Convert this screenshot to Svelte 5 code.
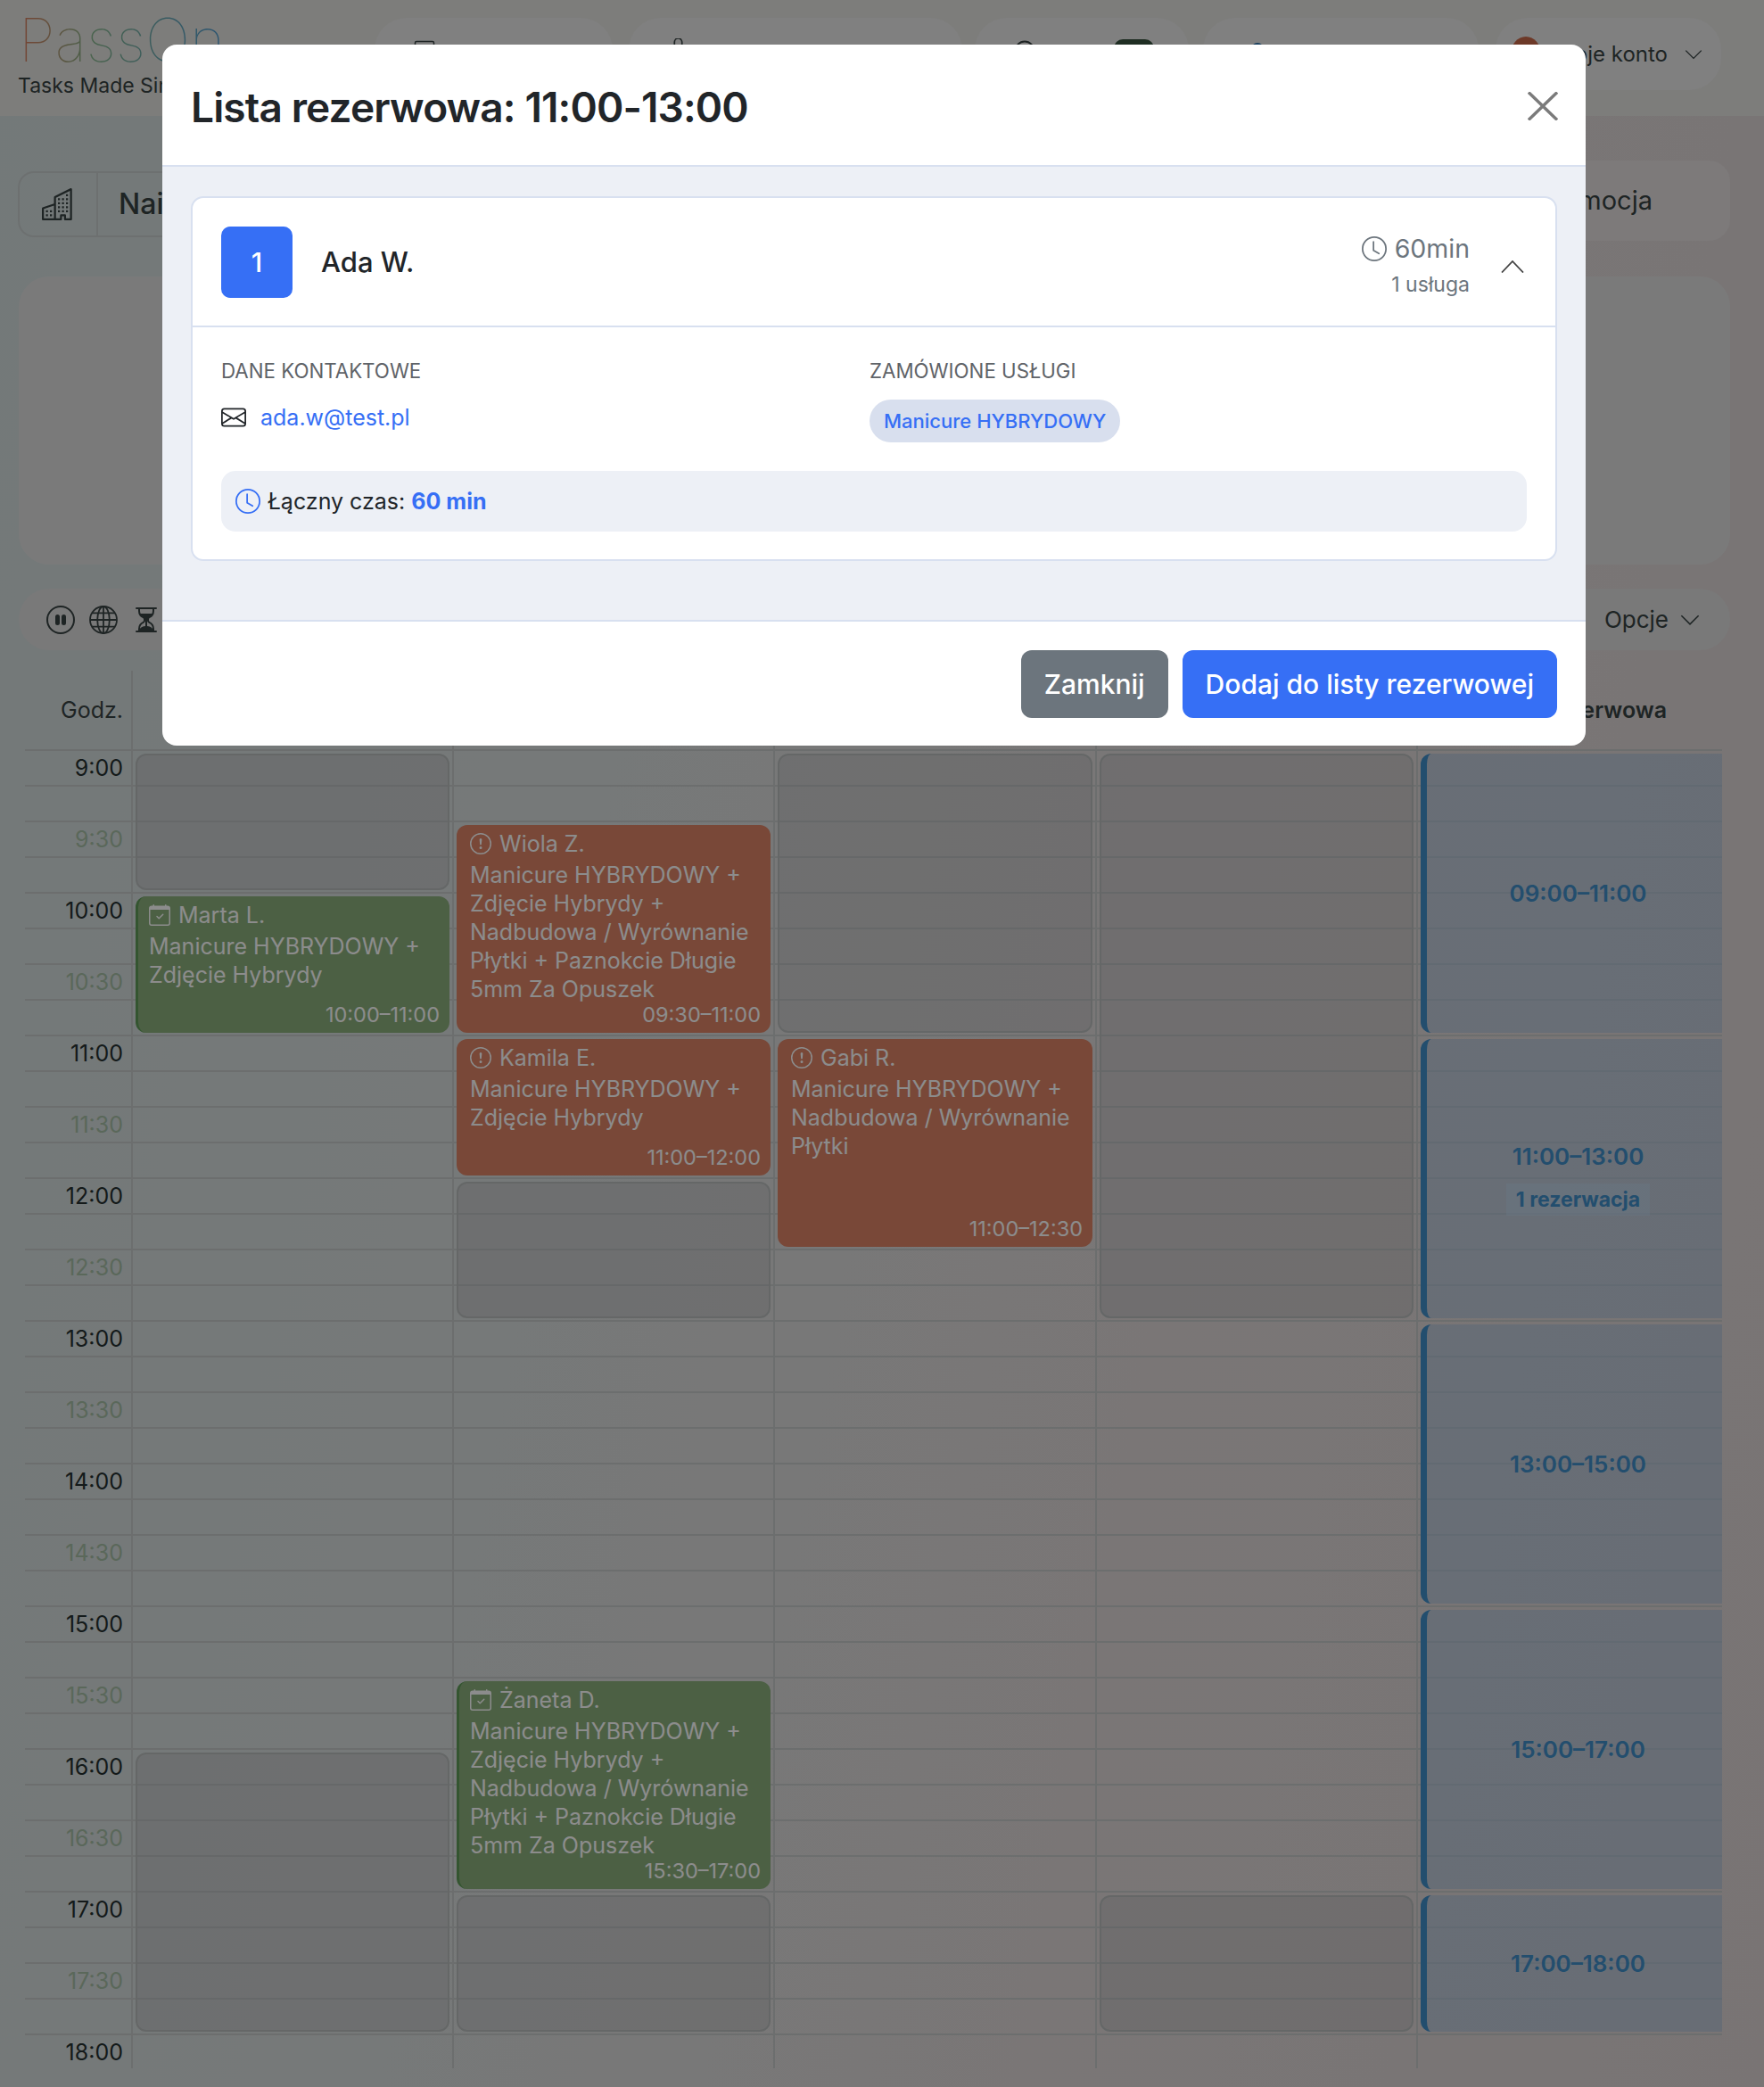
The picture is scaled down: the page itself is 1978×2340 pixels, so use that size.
<script>
	const hours = [];
	for (let h = 9; h <= 18; h++) {
		hours.push(`${h}:00`);
		if (h < 18) hours.push(`${h}:30`);
	}

	const rowH = 40;
	// px from the top of the grid, 160px per hour
	const y = (t) => {
		const [h, m] = t.split(':').map(Number);
		return (h - 9 + m / 60) * rowH * 4;
	};
	const box = (from, to) => `top:${y(from) + 3}px;height:${y(to) - y(from) - 7}px`;

	const long = 'Manicure HYBRYDOWY + Zdjęcie Hybrydy + Nadbudowa / Wyrównanie Płytki + Paznokcie Długie 5mm Za Opuszek';
	const short = 'Manicure HYBRYDOWY + Zdjęcie Hybrydy';

	const columns = [
		{
			blocked: [['9:00', '10:00'], ['16:00', '18:00']],
			events: [{ kind: 'green', name: 'Marta L.', text: short, from: '10:00', to: '11:00', label: '10:00–11:00' }]
		},
		{
			blocked: [['12:00', '13:00'], ['17:00', '18:00']],
			events: [
				{ kind: 'red', name: 'Wiola Z.', text: long, from: '9:30', to: '11:00', label: '09:30–11:00' },
				{ kind: 'red', name: 'Kamila E.', text: short, from: '11:00', to: '12:00', label: '11:00–12:00' },
				{ kind: 'green', name: 'Żaneta D.', text: long, from: '15:30', to: '17:00', label: '15:30–17:00' }
			]
		},
		{
			blocked: [['9:00', '11:00']],
			events: [
				{
					kind: 'red',
					name: 'Gabi R.',
					text: 'Manicure HYBRYDOWY + Nadbudowa / Wyrównanie Płytki',
					from: '11:00',
					to: '12:30',
					label: '11:00–12:30'
				}
			]
		},
		{ blocked: [['9:00', '13:00'], ['17:00', '18:00']], events: [] }
	];

	const waitlist = [
		{ from: '9:00', to: '11:00', label: '09:00–11:00' },
		{ from: '11:00', to: '13:00', label: '11:00–13:00', count: '1 rezerwacja' },
		{ from: '13:00', to: '15:00', label: '13:00–15:00' },
		{ from: '15:00', to: '17:00', label: '15:00–17:00' },
		{ from: '17:00', to: '18:00', label: '17:00–18:00' }
	];
</script>

{#snippet clock(cls)}
	<svg class={cls} viewBox="0 0 16 16" fill="currentColor">
		<path d="M8 3.5a.5.5 0 0 0-1 0V9a.5.5 0 0 0 .252.434l3.5 2a.5.5 0 0 0 .496-.868L8 8.71V3.5z" />
		<path d="M8 16A8 8 0 1 0 8 0a8 8 0 0 0 0 16zm7-8A7 7 0 1 1 1 8a7 7 0 0 1 14 0z" />
	</svg>
{/snippet}

{#snippet chevron(cls)}
	<svg class={cls} viewBox="0 0 16 16" fill="none" stroke="currentColor" stroke-width="1.1">
		<path d="M1 4.5l7 7 7-7" />
	</svg>
{/snippet}

<div class="page">
	<header class="top">
		<div class="logo">
			<div class="logo-word">PassOn</div>
			<div class="logo-sub">Tasks Made Simple</div>
		</div>
		<nav class="nav">
			<div class="nav-pill p1">
				<svg class="nav-icon" viewBox="0 0 16 16" fill="none" stroke="currentColor"><rect x="1" y="1" width="14" height="14" rx="1" /><path d="M1 4h14M4 6.5h2M7 6.5h2M10 6.5h2" /></svg>
			</div>
			<div class="nav-pill p2">
				<svg class="nav-icon bag" viewBox="0 0 16 16" fill="none" stroke="currentColor"><path d="M5.5 5V2.5a2.5 2.5 0 0 1 5 0V5M2 5h12v10H2z" /></svg>
			</div>
			<div class="nav-pill p3">
				<svg class="nav-icon person" viewBox="0 0 16 16" fill="none" stroke="currentColor" stroke-width="1.3"><circle cx="8" cy="8" r="7" /></svg>
				<span class="badge"></span>
			</div>
			<div class="nav-pill p4"><span class="dot"></span></div>
			<div class="nav-pill p5">
				<span class="avatar"></span>
				<span class="account">Moje konto</span>
				{@render chevron('account-chevron')}
			</div>
		</nav>
	</header>

	<div class="salon-row">
		<div class="salon">
			<div class="salon-icon">
				<svg viewBox="0 0 16 16" fill="currentColor">
					<path d="M14.763.075A.5.5 0 0 1 15 .5v15a.5.5 0 0 1-.5.5h-3a.5.5 0 0 1-.5-.5V14h-1v1.5a.5.5 0 0 1-.5.5h-9a.5.5 0 0 1-.5-.5V10a.5.5 0 0 1 .342-.474L6 7.64V4.5a.5.5 0 0 1 .276-.447l8-4a.5.5 0 0 1 .487.022ZM6 8.694 1 10.36V15h5V8.694ZM7 15h2v-1.5a.5.5 0 0 1 .5-.5h2a.5.5 0 0 1 .5.5V15h2V1.309l-7 3.5V15Z" />
					<path d="M2 11h1v1H2v-1Zm2 0h1v1H4v-1Zm-2 2h1v1H2v-1Zm2 0h1v1H4v-1Zm4-4h1v1H8V9Zm2 0h1v1h-1V9Zm-2 2h1v1H8v-1Zm2 0h1v1h-1v-1Zm2-2h1v1h-1V9Zm0 2h1v1h-1v-1ZM8 7h1v1H8V7Zm2 0h1v1h-1V7Zm2 0h1v1h-1V7ZM8 5h1v1H8V5Zm2 0h1v1h-1V5Zm2 0h1v1h-1V5Zm0-2h1v1h-1V3Z" />
				</svg>
			</div>
			<div class="salon-name">Nail Studio</div>
		</div>
		<div class="promo">Promocja</div>
	</div>

	<div class="panel"></div>

	<div class="toolbar">
		<div class="tools">
			<svg viewBox="0 0 16 16" fill="currentColor">
				<path d="M8 15A7 7 0 1 1 8 1a7 7 0 0 1 0 14zm0 1A8 8 0 1 0 8 0a8 8 0 0 0 0 16z" />
				<path d="M5 6.25a1.25 1.25 0 1 1 2.5 0v3.5a1.25 1.25 0 1 1-2.5 0v-3.5zm3.5 0a1.25 1.25 0 1 1 2.5 0v3.5a1.25 1.25 0 1 1-2.5 0v-3.5z" />
			</svg>
			<svg viewBox="0 0 16 16" fill="none" stroke="currentColor" stroke-width="0.9">
				<circle cx="8" cy="8" r="7.5" />
				<ellipse cx="8" cy="8" rx="3.4" ry="7.5" />
				<path d="M8 .5v15M.5 8h15M1.6 4.2h12.8M1.6 11.8h12.8" />
			</svg>
			<svg viewBox="0 0 16 16" fill="currentColor">
				<path d="M2.5 15a.5.5 0 1 1 0-1h1v-1a4.5 4.5 0 0 1 2.557-4.06c.29-.139.443-.377.443-.59v-.7c0-.213-.154-.451-.443-.59A4.5 4.5 0 0 1 3.5 3V2h-1a.5.5 0 0 1 0-1h11a.5.5 0 0 1 0 1h-1v1a4.5 4.5 0 0 1-2.557 4.06c-.29.139-.443.377-.443.59v.7c0 .213.154.451.443.59A4.5 4.5 0 0 1 12.5 13v1h1a.5.5 0 0 1 0 1h-11zm2-13v1c0 .537.12 1.045.337 1.5h6.326c.216-.455.337-.963.337-1.5V2h-7zm3 6.35c0 .701-.478 1.236-1.011 1.492A3.5 3.5 0 0 0 4.5 13s.866-1.299 3-1.48V8.35zm1 0v3.17c2.134.181 3 1.48 3 1.48a3.5 3.5 0 0 0-1.989-3.158C8.978 9.586 8.5 9.052 8.5 8.351z" />
			</svg>
		</div>
		<div class="options">Opcje {@render chevron('options-chevron')}</div>
	</div>

	<div class="calendar">
		<div class="head time-head">Godz.</div>
		<div class="head"></div>
		<div class="head"></div>
		<div class="head"></div>
		<div class="head"></div>
		<div class="head waitlist-head">Lista rezerwowa</div>

		<div class="times">
			{#each hours as hour, i}
				<div class="time" class:half={i % 2 === 1}>{hour}</div>
			{/each}
		</div>

		{#each columns as col}
			<div class="day">
				{#each col.blocked as [from, to]}
					<div class="blocked" style={box(from, to)}></div>
				{/each}
				{#each col.events as ev}
					<div class="event {ev.kind}" style={box(ev.from, ev.to)}>
						<div class="event-name">
							{#if ev.kind === 'red'}
								<svg viewBox="0 0 16 16" fill="currentColor">
									<path d="M8 15A7 7 0 1 1 8 1a7 7 0 0 1 0 14zm0 1A8 8 0 1 0 8 0a8 8 0 0 0 0 16z" />
									<path d="M7.002 11a1 1 0 1 1 2 0 1 1 0 0 1-2 0zM7.1 4.995a.905.905 0 1 1 1.8 0l-.35 3.507a.552.552 0 0 1-1.1 0L7.1 4.995z" />
								</svg>
							{:else}
								<svg viewBox="0 0 16 16" fill="currentColor">
									<path d="M10.854 7.146a.5.5 0 0 1 0 .708l-3 3a.5.5 0 0 1-.708 0l-1.5-1.5a.5.5 0 1 1 .708-.708L7.5 9.793l2.646-2.647a.5.5 0 0 1 .708 0z" />
									<path d="M3.5 0a.5.5 0 0 1 .5.5V1h8V.5a.5.5 0 0 1 1 0V1h1a2 2 0 0 1 2 2v11a2 2 0 0 1-2 2H2a2 2 0 0 1-2-2V3a2 2 0 0 1 2-2h1V.5a.5.5 0 0 1 .5-.5zM1 4v10a1 1 0 0 0 1 1h12a1 1 0 0 0 1-1V4H1z" />
								</svg>
							{/if}
							{ev.name}
						</div>
						<div class="event-text">{ev.text}</div>
						<div class="event-time">{ev.label}</div>
					</div>
				{/each}
			</div>
		{/each}

		<div class="day last">
			{#each waitlist as slot}
				<div class="slot" style={box(slot.from, slot.to)}>
					<div>{slot.label}</div>
					{#if slot.count}
						<div class="slot-count">{slot.count}</div>
					{/if}
				</div>
			{/each}
		</div>
	</div>

	<div class="backdrop"></div>

	<div class="modal">
		<div class="modal-head">
			<h2>Lista rezerwowa: 11:00-13:00</h2>
			<svg class="close" viewBox="0 0 34 32" fill="none" stroke="currentColor" stroke-width="3.4">
				<path d="M1 0.5l32 31M33 0.5l-32 31" />
			</svg>
		</div>
		<div class="modal-body">
			<div class="card">
				<div class="card-head">
					<div class="num">1</div>
					<div class="who">Ada W.</div>
					<div class="meta">
						<div class="meta-time">{@render clock('meta-clock')} 60min</div>
						<div class="meta-count">1 usługa</div>
					</div>
					<svg class="collapse" viewBox="0 0 26 14" fill="none" stroke="currentColor" stroke-width="1.8">
						<path d="M1 13.5L13 1l12 12.5" />
					</svg>
				</div>
				<div class="card-body">
					<div class="details">
						<div>
							<div class="label">DANE KONTAKTOWE</div>
							<div class="contact">
								<svg viewBox="0 0 16 16" preserveAspectRatio="none" fill="currentColor">
									<path d="M0 4a2 2 0 0 1 2-2h12a2 2 0 0 1 2 2v8a2 2 0 0 1-2 2H2a2 2 0 0 1-2-2V4Zm2-1a1 1 0 0 0-1 1v.217l7 4.2 7-4.2V4a1 1 0 0 0-1-1H2Zm13 2.383-4.708 2.825L15 11.105V5.383Zm-.034 6.876-5.64-3.471L8 9.583l-1.326-.795-5.64 3.47A1 1 0 0 0 2 13h12a1 1 0 0 0 .966-.741ZM1 11.105l4.708-2.897L1 5.383v5.722Z" />
								</svg>
								<a href="mailto:ada.w@test.pl">ada.w@test.pl</a>
							</div>
						</div>
						<div>
							<div class="label">ZAMÓWIONE USŁUGI</div>
							<span class="chip">Manicure HYBRYDOWY</span>
						</div>
					</div>
					<div class="total">
						{@render clock('total-clock')}
						<span>Łączny czas: <strong>60 min</strong></span>
					</div>
				</div>
			</div>
		</div>
		<div class="modal-foot">
			<button class="btn grey">Zamknij</button>
			<button class="btn blue">Dodaj do listy rezerwowej</button>
		</div>
	</div>
</div>

<style>
	:global(body) {
		margin: 0;
		font-family: Inter, 'Liberation Sans', sans-serif;
	}

	.page {
		position: relative;
		width: 1978px;
		height: 2340px;
		overflow: hidden;
		color: #384343;
		background: linear-gradient(100deg, #d2dcdd 0%, #d8dcdc 35%, #ded8d8 65%, #dcd4d4 100%);
	}

	.top {
		display: flex;
		justify-content: space-between;
		height: 130px;
		padding: 20px 48px 0 20px;
		box-sizing: border-box;
		background: #e4e4e0;
	}

	.logo-word {
		margin: -6px 0 0 1px;
		font-size: 67px;
		font-weight: 100;
		line-height: 62px;
		color: transparent;
		background: linear-gradient(90deg, #d97a5c 0%, #86b58c 35%, #4f9ad0 100%);
		background-clip: text;
		-webkit-background-clip: text;
	}

	.logo-sub {
		margin-top: 5px;
		font-size: 23px;
		line-height: 30px;
	}

	.nav {
		display: flex;
		gap: 16px;
		height: 81px;
	}

	.nav-pill {
		display: flex;
		align-items: flex-start;
		padding-top: 25px;
		box-sizing: border-box;
		border-radius: 36px;
		background: #e9e9e9;
	}

	.p1 { width: 267px; padding-left: 44px; }
	.p2 { width: 374px; padding-left: 42px; margin-left: 2px; }
	.p3 { width: 240px; padding-left: 44px; gap: 88px; margin-left: -2px; }
	.p4 { width: 309px; padding-left: 54px; }
	.p5 {
		width: 253px;
		margin-left: 3px;
		padding: 0 21px 0 17px;
		align-items: center;
	}

	.nav-icon {
		width: 24px;
		height: 24px;
	}

	.bag {
		width: 27px;
		height: 27px;
		margin-top: -2px;
	}

	.badge {
		width: 45px;
		height: 26px;
		margin-top: -1px;
		border-radius: 10px;
		background: #3a5540;
	}

	.dot {
		width: 14px;
		height: 14px;
		margin-top: 3px;
		border-radius: 50%;
		background: #2a6fa8;
	}

	.avatar {
		width: 34px;
		height: 40px;
		border-radius: 50%;
		background: #c7684a;
	}

	.account {
		margin-left: auto;
		font-size: 24px;
		white-space: nowrap;
	}

	:global(.account-chevron) {
		width: 20px;
		height: 20px;
		margin-left: 19px;
	}

	.salon-row {
		display: flex;
		justify-content: space-between;
		align-items: center;
		height: 90px;
		margin: 50px 38px 0 20px;
	}

	.salon {
		display: flex;
		height: 74px;
		width: 400px;
		margin-top: 8px;
		box-sizing: border-box;
		border: 2px solid #c6cdcd;
		border-radius: 18px;
	}

	.salon-icon {
		display: flex;
		align-items: center;
		justify-content: center;
		width: 86px;
		border-right: 2px solid #c6cdcd;
	}

	.salon-icon svg {
		width: 36px;
		height: 36px;
	}

	.salon-name {
		padding-left: 23px;
		font-size: 32px;
		font-weight: 500;
		line-height: 70px;
	}

	.promo {
		width: 400px;
		height: 90px;
		box-sizing: border-box;
		padding-right: 87px;
		border-radius: 24px;
		background: #e3dede;
		font-size: 29px;
		line-height: 90px;
		text-align: right;
	}

	.panel {
		height: 323px;
		margin: 40px 38px 0 21px;
		border-radius: 34px;
		background: #dfdfdf;
	}

	.toolbar {
		display: flex;
		justify-content: space-between;
		align-items: center;
		height: 69px;
		margin: 27px 38px 0 21px;
		padding: 0 34px 0 31px;
		box-sizing: border-box;
		border-radius: 34px;
		background: #dcdcdc;
	}

	.tools {
		display: flex;
		gap: 16px;
	}

	.tools svg {
		width: 32px;
		height: 32px;
	}

	.options {
		display: flex;
		align-items: center;
		gap: 13px;
		font-size: 26px;
	}

	:global(.options-chevron) {
		width: 22px;
		height: 22px;
	}

	.calendar {
		display: grid;
		grid-template-columns: 119px 360px 360px 361px 360px 343px;
		grid-template-rows: 90px 1477px;
		margin: 23px 0 0 28px;
	}

	.head {
		display: flex;
		align-items: center;
		justify-content: center;
		border-left: 2px solid #c5c9c9;
		font-size: 25px;
		border-bottom: 2px solid #c5c9c9;
	}

	.time-head {
		justify-content: flex-end;
		padding-right: 9px;
		border-left: 0;
	}

	.waitlist-head {
		padding-left: 20px;
		font-weight: 600;
	}

	.times {
		background: repeating-linear-gradient(
			to bottom,
			transparent 0,
			transparent 38px,
			#c5c9c9 38px,
			#c5c9c9 40px
		);
	}

	.time {
		height: 80px;
		box-sizing: border-box;
		padding: 0 9px 0 0;
		font-size: 25px;
		line-height: 38px;
		text-align: right;
		color: #263030;
	}

	.half {
		color: #a5bda5;
	}

	.day {
		position: relative;
		border-left: 2px solid #c5c9c9;
		background: repeating-linear-gradient(
			to bottom,
			transparent 0,
			transparent 38px,
			#c5c9c9 38px,
			#c5c9c9 40px
		);
	}

	.blocked {
		position: absolute;
		left: 3px;
		right: 3px;
		box-sizing: border-box;
		border: 2px solid #b8bcbc;
		border-radius: 12px;
		background: rgba(165, 165, 170, 0.3);
	}

	.event {
		position: absolute;
		left: 3px;
		right: 3px;
		display: flex;
		flex-direction: column;
		box-sizing: border-box;
		padding: 5px 11px 8px 15px;
		border-radius: 12px;
		color: #fff;
		font-size: 25px;
		line-height: 32px;
	}

	.red {
		background: #dc8467;
	}

	.green {
		background: #8aaf7d;
		border-left: 3px solid #5f9c58;
		padding-left: 12px;
	}

	.event-name {
		display: flex;
		align-items: center;
		gap: 9px;
		margin-bottom: 3px;
	}

	.event-name svg {
		width: 24px;
		height: 24px;
	}

	.event-time {
		margin-top: auto;
		font-size: 23.5px;
		line-height: 24px;
		text-align: right;
		white-space: nowrap;
	}

	.slot {
		position: absolute;
		left: 3px;
		right: 0;
		display: flex;
		flex-direction: column;
		align-items: center;
		justify-content: center;
		box-sizing: border-box;
		padding-left: 8px;
		border-left: 7px solid #408ec8;
		border-radius: 12px 0 0 12px;
		background: rgba(160, 185, 215, 0.5);
		color: #408ec8;
		font-size: 26px;
		font-weight: 600;
		line-height: 32px;
	}

	.slot-count {
		margin-top: 14px;
		padding: 2px 11px;
		background: rgba(190, 215, 240, 0.45);
		font-size: 23px;
		font-weight: 700;
	}

	.backdrop {
		position: absolute;
		inset: 0;
		background: rgba(0, 0, 0, 0.45);
	}

	.modal {
		position: absolute;
		top: 50px;
		left: 182px;
		display: flex;
		flex-direction: column;
		width: 1596px;
		height: 786px;
		overflow: hidden;
		border-radius: 16px;
		background: #fff;
		color: #212529;
	}

	.modal-head {
		display: flex;
		align-items: center;
		justify-content: space-between;
		height: 137px;
		padding: 2px 31px 0 32px;
		box-sizing: border-box;
		border-bottom: 2px solid #d8e0f0;
	}

	h2 {
		margin: 2px 0 0;
		font-size: 46px;
		font-weight: 600;
		line-height: 56px;
		letter-spacing: -0.85px;
	}

	.close {
		width: 34px;
		height: 32px;
		color: #7b7b7b;
	}

	.modal-body {
		flex: 1;
		padding: 33px 32px;
		background: #edf0f6;
	}

	.card {
		height: 409px;
		box-sizing: border-box;
		border: 2px solid #d8e0f0;
		border-radius: 14px;
		background: #fff;
	}

	.card-head {
		display: flex;
		align-items: center;
		height: 145px;
		padding: 0 35px 0 32px;
		box-sizing: border-box;
		border-bottom: 2px solid #d8e0f0;
	}

	.num {
		width: 80px;
		height: 80px;
		border-radius: 10px;
		background: #366ff5;
		color: #fff;
		font-size: 30px;
		font-weight: 500;
		line-height: 80px;
		text-align: center;
	}

	.who {
		flex: 1;
		margin-left: 32px;
		font-size: 31px;
		font-weight: 500;
	}

	.meta {
		padding-top: 6px;
		text-align: right;
		color: #6c757d;
	}

	.meta-time {
		display: flex;
		align-items: center;
		justify-content: flex-end;
		gap: 9px;
		font-size: 28.5px;
		line-height: 40px;
	}

	:global(.meta-clock) {
		width: 28px;
		height: 28px;
	}

	.meta-count {
		margin-top: 5px;
		font-size: 23px;
		line-height: 30px;
	}

	.collapse {
		width: 26px;
		height: 14px;
		margin: 10px 0 0 35px;
		color: #444;
	}

	.card-body {
		padding: 34px 32px 0 32px;
	}

	.details {
		display: grid;
		grid-template-columns: 727px 1fr;
		height: 127px;
	}

	.label {
		font-size: 22.3px;
		line-height: 30px;
		color: #5f6368;
	}

	.contact {
		display: flex;
		align-items: center;
		gap: 16px;
		margin-top: 21px;
		font-size: 25px;
		line-height: 32px;
	}

	.contact svg {
		width: 28px;
		height: 28px;
	}

	.contact a {
		color: #366ff5;
		text-decoration: none;
	}

	.chip {
		display: inline-block;
		margin-top: 17px;
		padding: 0 16px;
		height: 48px;
		border-radius: 24px;
		background: #d8dfee;
		color: #366ff5;
		font-size: 22px;
		font-weight: 500;
		line-height: 48px;
	}

	.total {
		display: flex;
		align-items: center;
		gap: 8px;
		height: 68px;
		padding-left: 16px;
		border-radius: 16px;
		background: #edf0f6;
		font-size: 25px;
	}

	:global(.total-clock) {
		width: 28px;
		height: 28px;
		color: #366ff5;
	}

	strong {
		color: #366ff5;
		font-weight: 700;
	}

	.modal-foot {
		display: flex;
		justify-content: flex-end;
		gap: 16px;
		height: 141px;
		padding: 32px 32px 0 0;
		box-sizing: border-box;
		border-top: 2px solid #d8e0f0;
	}

	.btn {
		height: 76px;
		padding: 0 26px;
		border: 0;
		border-radius: 12px;
		color: #fff;
		font-family: inherit;
		font-size: 30px;
		font-weight: 500;
	}

	.grey {
		background: #6c757d;
	}

	.blue {
		background: #366ff5;
	}
</style>
